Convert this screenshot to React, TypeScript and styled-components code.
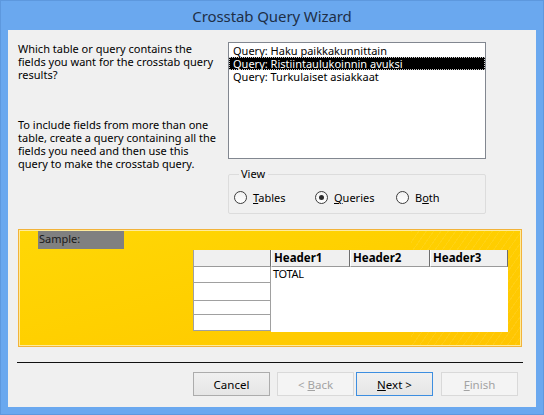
import styled, { createGlobalStyle } from 'styled-components';

const GlobalStyle = createGlobalStyle`
  html, body {
    margin: 0;
    padding: 0;
    background: #fff;
  }
  * {
    box-sizing: border-box;
  }
  body {
    font-family: 'Noto Sans', 'Open Sans', sans-serif;
    font-size: 11px;
    color: #000;
  }
`;

const queries = [
  'Query: Haku paikkakunnittain',
  'Query: Ristiintaulukoinnin avuksi',
  'Query: Turkulaiset asiakkaat',
];

const question = [
  'Which table or query contains the',
  'fields you want for the crosstab query',
  'results?',
];

const hint = [
  'To include fields from more than one',
  'table, create a query containing all the',
  'fields you need and then use this',
  'query to make the crosstab query.',
];

const sampleRows = [16, 18, 14, 16];

const Window = styled.div`
  width: 544px;
  height: 415px;
  display: flex;
  flex-direction: column;
  background: #6aa8ef;
  border: 1px solid #5d98de;
  padding: 0 7px 7px;
`;

const TitleBar = styled.div`
  height: 29px;
  display: flex;
  align-items: center;
  justify-content: center;
  font-size: 15px;
  color: #1e2f47;
  letter-spacing: -0.1px;
`;

const Body = styled.div`
  flex: 1;
  background: #f0f0f0;
  padding: 12px 14px 0 10px;
  display: flex;
  flex-direction: column;
`;

const TopRow = styled.div`
  display: flex;
`;

const Prompt = styled.div`
  width: 210px;
  color: #000;
`;

const Para = styled.div<{ gap?: number }>`
  margin: 0 0 ${p => p.gap ?? 0}px;
`;

const Line = styled.div`
  height: 13px;
  line-height: 13px;
  font-size: 11px;
  white-space: nowrap;
`;

const RightCol = styled.div`
  width: 258px;
  display: flex;
  flex-direction: column;
`;

const ListBox = styled.div`
  height: 117px;
  background: #fff;
  border: 1px solid #828790;
  padding-top: 1px;
`;

const ListItem = styled.div<{ selected?: boolean }>`
  height: 13px;
  line-height: 13px;
  font-size: 11px;
  padding-left: 4px;
  white-space: nowrap;
  overflow: hidden;
  background: ${p => (p.selected ? '#000' : 'transparent')};
  color: ${p => (p.selected ? '#fff' : '#000')};
  outline: ${p => (p.selected ? '1px dotted #c8c8c8' : 'none')};
  outline-offset: -1px;
`;

const GroupBox = styled.fieldset`
  margin: 8px 0 0;
  padding: 0 0 8px 5px;
  border: 1px solid #dcdcdc;
  border-radius: 2px;
`;

const Legend = styled.legend`
  margin-left: 5px;
  padding: 0 3px 0 2px;
  font-size: 11px;
  line-height: 14px;
  color: #000;
`;

const RadioRow = styled.div`
  display: flex;
  margin-top: 9px;
`;

const RadioItem = styled.label`
  width: 81px;
  display: flex;
  align-items: center;
  gap: 6px;
  font-size: 11px;
  line-height: 15px;
`;

const RadioCircle = styled.span<{ checked?: boolean }>`
  width: 13px;
  height: 13px;
  border-radius: 50%;
  border: 1px solid #3c3c3c;
  background: linear-gradient(#f2f2f2, #fff);
  display: flex;
  align-items: center;
  justify-content: center;

  &::after {
    content: '';
    display: ${p => (p.checked ? 'block' : 'none')};
    width: 5px;
    height: 5px;
    border-radius: 50%;
    background: #2b2b2b;
  }
`;

const Key = styled.u`
  text-underline-offset: 1px;
`;

const SamplePanel = styled.div`
  margin-top: 15px;
  width: 504px;
  height: 118px;
  border: 1px solid #f2b33a;
  box-shadow: inset 0 0 0 1px #ffeb9c;
  padding: 1px 0 0 19px;
  display: flex;
  flex-direction: column;
  background:
    repeating-linear-gradient(
      -55deg,
      rgba(255, 255, 255, 0) 0 5px,
      rgba(255, 236, 150, 0.12) 5px 6px
    ) right top / 110px 100% no-repeat,
    linear-gradient(165deg, #ffd706 0%, #ffd000 45%, #ffc502 100%);
`;

const SampleLabel = styled.div`
  width: 86px;
  height: 18px;
  background: #808080;
  color: #1a1a1a;
  font-size: 11px;
  line-height: 16px;
  padding-left: 1px;
`;

const Grid = styled.div`
  margin: 1px 0 0 155px;
  width: 315px;
  display: grid;
  grid-template-columns: 78px 79px 80px 78px;
  grid-template-rows: 17px 65px;
`;

const CornerCell = styled.div`
  background: #f0f0f0;
  border-left: 1px solid #a0a0a0;
  border-bottom: 1px solid #9a9a9a;
  border-right: 1px solid #6d6d6d;
`;

const HeadCell = styled.div`
  background: #f0f0f0;
  border-left: 1px solid #fff;
  border-right: 1px solid #6d6d6d;
  border-bottom: 1px solid #9a9a9a;
  font-weight: 700;
  font-size: 11.5px;
  line-height: 15px;
  padding-left: 2px;
  color: #000;
`;

const RowHeads = styled.div`
  display: flex;
  flex-direction: column;
`;

const RowHead = styled.div`
  background: #fff;
  border-left: 1px solid #a0a0a0;
  border-right: 1px solid #a0a0a0;
  border-bottom: 1px solid #a0a0a0;
`;

const DataArea = styled.div`
  grid-column: 2 / 5;
  background: #fff;
  font-size: 11px;
  line-height: 14px;
  padding-left: 2px;
  letter-spacing: -0.3px;
`;

const Separator = styled.div`
  margin: 15px 0 0 -1px;
  width: 506px;
  height: 1px;
  background: #111;
`;

const ButtonRow = styled.div`
  margin-top: 9px;
  padding-right: 4px;
  display: flex;
  justify-content: flex-end;
`;

const Button = styled.button<{ variant?: 'normal' | 'default' | 'disabled'; gap?: number }>`
  width: 77px;
  height: 24px;
  margin-left: ${p => p.gap ?? 0}px;
  font-family: 'Noto Sans', 'Open Sans', sans-serif;
  font-size: 11.5px;
  padding: 0;
  border: 1px solid
    ${p => (p.variant === 'default' ? '#3d8ee0' : p.variant === 'disabled' ? '#d9d9d9' : '#acacac')};
  background: ${p =>
    p.variant === 'disabled' ? '#f4f4f4' : 'linear-gradient(#f0f0f0, #e5e5e5)'};
  color: ${p => (p.variant === 'disabled' ? '#a3a3a3' : '#000')};
  border-radius: 0;
`;

export default function App() {
  return (
    <>
      <GlobalStyle />
      <Window>
        <TitleBar>Crosstab Query Wizard</TitleBar>
        <Body>
          <TopRow>
            <Prompt>
              <Para gap={37}>
                {question.map(line => (
                  <Line key={line}>{line}</Line>
                ))}
              </Para>
              <Para>
                {hint.map(line => (
                  <Line key={line}>{line}</Line>
                ))}
              </Para>
            </Prompt>
            <RightCol>
              <ListBox>
                {queries.map((q, i) => (
                  <ListItem key={q} selected={i === 1}>
                    {q}
                  </ListItem>
                ))}
              </ListBox>
              <GroupBox>
                <Legend>View</Legend>
                <RadioRow>
                  <RadioItem>
                    <RadioCircle />
                    <span>
                      <Key>T</Key>ables
                    </span>
                  </RadioItem>
                  <RadioItem>
                    <RadioCircle checked />
                    <span>
                      <Key>Q</Key>ueries
                    </span>
                  </RadioItem>
                  <RadioItem>
                    <RadioCircle />
                    <span>
                      B<Key>o</Key>th
                    </span>
                  </RadioItem>
                </RadioRow>
              </GroupBox>
            </RightCol>
          </TopRow>

          <SamplePanel>
            <SampleLabel>Sample:</SampleLabel>
            <Grid>
              <CornerCell />
              <HeadCell>Header1</HeadCell>
              <HeadCell>Header2</HeadCell>
              <HeadCell>Header3</HeadCell>
              <RowHeads>
                {sampleRows.map((h, i) => (
                  <RowHead key={i} style={{ height: h }} />
                ))}
              </RowHeads>
              <DataArea>TOTAL</DataArea>
            </Grid>
          </SamplePanel>

          <Separator />

          <ButtonRow>
            <Button variant="normal">Cancel</Button>
            <Button variant="disabled" gap={7}>
              &lt; <Key>B</Key>ack
            </Button>
            <Button variant="default" gap={2}>
              <Key>N</Key>ext &gt;
            </Button>
            <Button variant="disabled" gap={8}>
              <Key>F</Key>inish
            </Button>
          </ButtonRow>
        </Body>
      </Window>
    </>
  );
}
